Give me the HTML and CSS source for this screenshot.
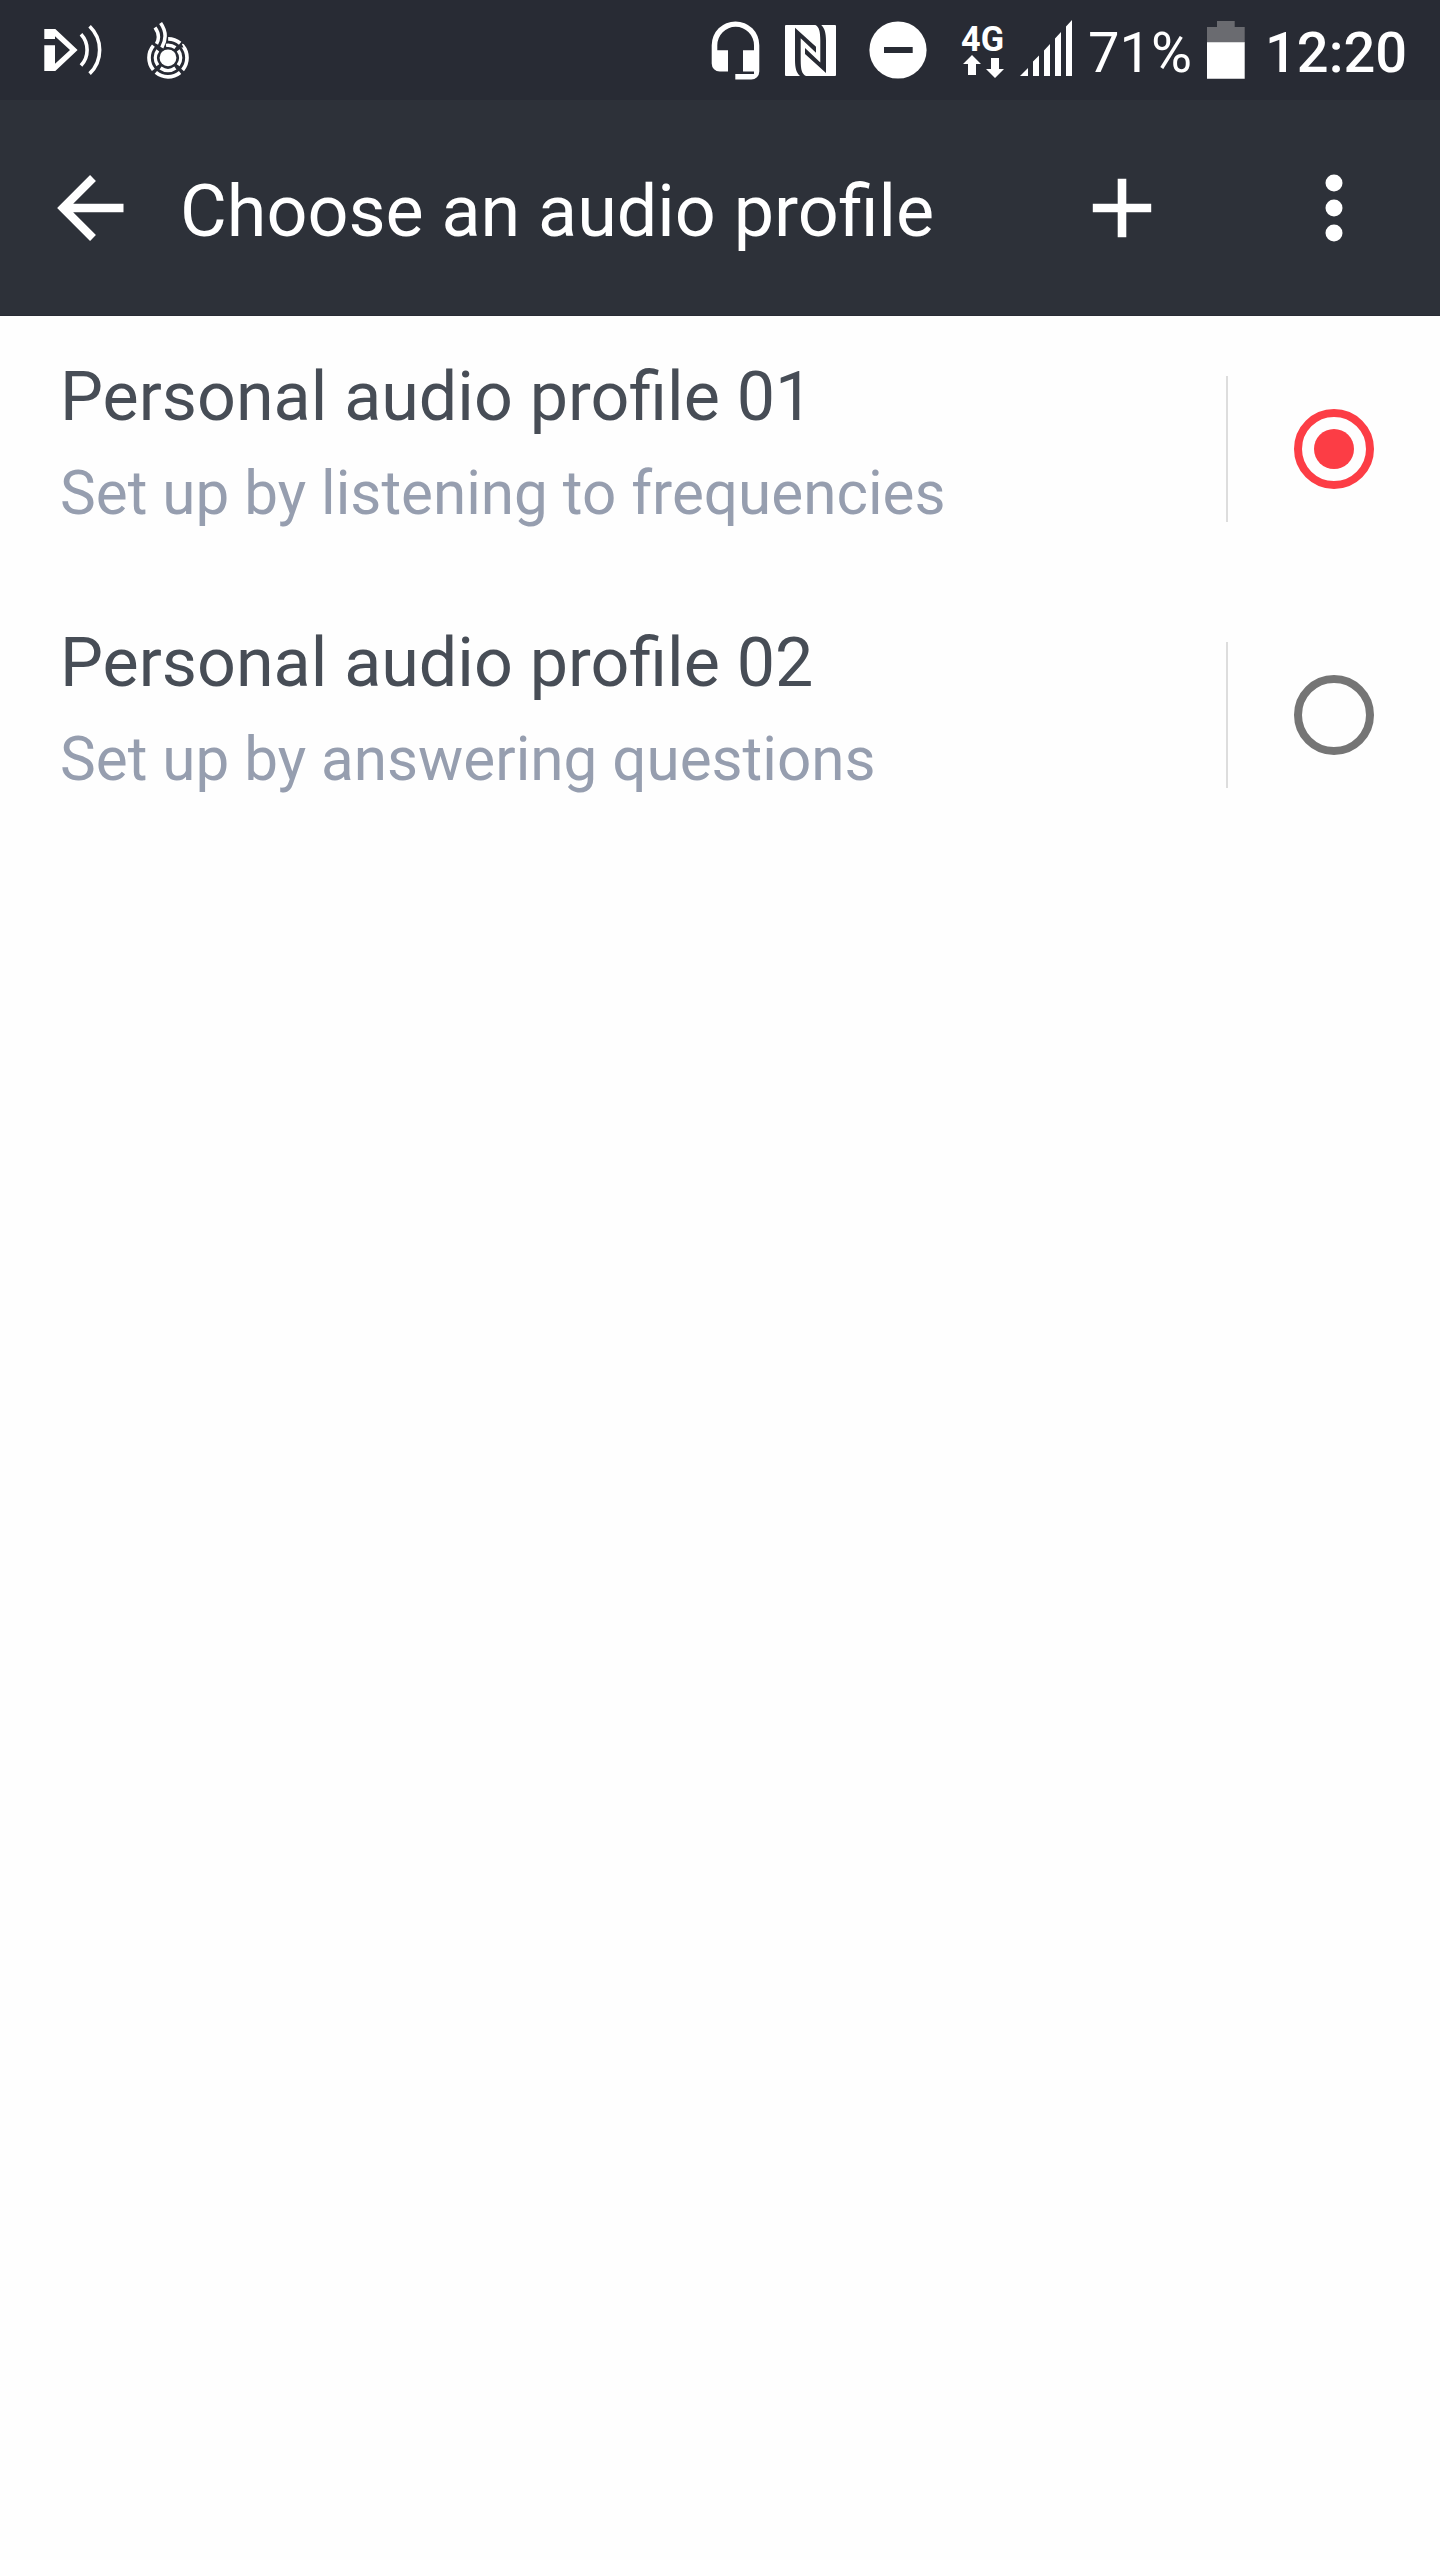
FILE: index.html
```html
<!DOCTYPE html>
<html lang="en">
<head>
<meta charset="utf-8">
<title>Choose an audio profile</title>
<link rel="stylesheet" href="styles.css">
</head>
<body>
<div class="status-bar">
  <div class="status-group notifications">
    <svg width="58" height="52" viewBox="44 24 58 52" fill="none" stroke="#fff">
      <path fill="#fff" stroke="none" fill-rule="evenodd" d="M44.3 29H55.3L77.6 50 55.3 71H44.3V45.2H55V63.8L70 50 55 36.2V39H44.3Z"/>
      <path stroke-width="3.6" d="M81 34.3A23 23 0 0 1 81 65.5M89.6 26.2A33 33 0 0 1 89.6 73.6"/>
    </svg>
    <svg width="44" height="58" viewBox="146 22 44 58" fill="none" stroke="#fff">
      <circle cx="168" cy="57.8" r="8.4" fill="#fff" stroke="none"/>
      <circle cx="168" cy="57.8" r="19" stroke-width="3.7" pathLength="360" stroke-dasharray="79 11 79 11 79 51 39 11" transform="rotate(-39.5 168 57.8)"/>
      <circle cx="168" cy="57.8" r="12.6" stroke-width="3.5" pathLength="360" stroke-dasharray="72 18 72 18 72 45 45 18" transform="rotate(-36 168 57.8)"/>
      <path stroke-width="3.5" d="M155 27.6Q161 36 156.500 43.800M160.600 23Q169 35 161.800 47.600"/>
    </svg>
  </div>
  <div class="status-group system">
    <svg class="headset" width="50" height="60" viewBox="711 20 50 60" fill="#fff">
      <path d="M711.7 45.200A23.800 23.800 0 0 1 759.300 45.200V71.500a8 8 0 0 1-8 8H735.300V74H754V71.600H743V50.200H754V45.200A18.300 18.300 0 0 0 717.300 45.200V50.200H728V71.600H719.700a8 8 0 0 1-8-8Z"/>
    </svg>
    <svg class="nfc" width="51" height="51" viewBox="785 25 51 51">
      <rect x="785" y="25" width="51" height="51" rx="1" fill="#fff"/>
      <g fill="#282b34">
        <path d="M795 27.700L816 46.700V52.700L800.700 38.300V60C800.700 70 802 74 806 76H800C796.500 73 795 68 795 60Z"/>
        <path transform="rotate(180 810.5 50.4)" d="M795 27.700L816 46.700V52.700L800.700 38.300V60C800.700 70 802 74 806 76H800C796.500 73 795 68 795 60Z"/>
      </g>
    </svg>
    <svg class="dnd" width="58" height="58" viewBox="869 21 58 58">
      <circle cx="898" cy="50" r="28.600" fill="#fff"/>
      <path fill="#282b34" d="M884 47H912.700V53H884Z"/>
    </svg>
    <svg class="network" width="46" height="74" viewBox="960 14 46 74" fill="#fff">
      <text class="network-label" x="961" y="51" textLength="43" lengthAdjust="spacingAndGlyphs">4G</text>
      <path d="M972 55L981 64H976V75H968V64H963ZM991 58H999V69H1004L995 78 986 69H991Z"/>
    </svg>
    <svg class="signal" width="52" height="56" viewBox="1020 20 52 56" fill="#fff">
      <path d="M1020 76L1028 68V76ZM1033 61.500L1039 55.500V76H1033ZM1044 50.500L1050 44V76H1044ZM1055 38.500L1061 32V76H1055ZM1066 26.500L1072 20V76H1066Z"/>
    </svg>
    <span class="battery-level">71%</span>
    <svg class="battery" width="38" height="58" viewBox="1207 21 38 58">
      <path fill="#6a6b70" d="M1217 21H1234.700V27H1244.700V43H1207V27H1217Z"/>
      <path fill="#fff" d="M1207 42.300H1244.700V78.700H1207Z"/>
    </svg>
    <span class="clock">12:20</span>
  </div>
</div>
<header class="app-bar">
  <svg class="back" width="68" height="68" viewBox="56 174 68 68" fill="none" stroke="#fff" stroke-width="8.300">
    <path d="M123.500 208H66M93 178L63 208L93 238"/>
  </svg>
  <h1 class="title">Choose an audio profile</h1>
  <svg class="add" width="60" height="60" viewBox="0 0 60 60" fill="#fff">
    <path d="M25.700 .800H34.300V25.700H59.200V34.300H34.300V59.200H25.700V34.300H.800V25.700H25.700Z"/>
  </svg>
  <svg class="more" width="18" height="68" viewBox="0 0 18 68" fill="#fff">
    <circle cx="9" cy="9" r="8.500"/><circle cx="9" cy="34" r="8.500"/><circle cx="9" cy="59" r="8.500"/>
  </svg>
</header>
<main class="profiles">
  <div class="profile">
    <div class="profile-text">
      <div class="profile-name">Personal audio profile 01</div>
      <div class="profile-detail">Set up by listening to frequencies</div>
    </div>
    <div class="profile-choice"><span class="radio selected"></span></div>
  </div>
  <div class="profile">
    <div class="profile-text">
      <div class="profile-name">Personal audio profile 02</div>
      <div class="profile-detail">Set up by answering questions</div>
    </div>
    <div class="profile-choice"><span class="radio"></span></div>
  </div>
</main>
</body>
</html>
```
FILE: styles.css
```css
* { box-sizing: border-box; }
body { margin: 0; min-height: 2560px; background: #fefefe; font-family: Roboto, sans-serif; }
svg { display: block; flex: none; overflow: hidden; }

.status-bar { display: flex; justify-content: space-between; height: 100px; padding: 0 34px 0 44px; background: #282b34; color: #fff; }
.status-group { display: flex; align-items: center; }
.notifications { gap: 44px; }
.notifications svg:last-child { margin-top: 2px; }
.headset { margin-right: 24px; }
.nfc { margin: 1px 33px 0 0; }
.dnd { margin-right: 33px; }
.network { margin: 2px 14px 0 0; }
.network-label { font-size: 35px; font-weight: 700; }
.signal { margin: -4px 16px 0 0; }
.battery-level { width: 105px; margin-right: 14px; }
.battery-level, .clock { font-size: 56px; line-height: 66px; margin-top: 6px; }
.battery { margin-right: 20px; }
.clock { width: 141px; font-weight: 500; }

.app-bar { display: flex; align-items: center; height: 216px; padding: 0 97px 0 56px; background: #2d3139; color: #fff; border-bottom: 1px solid #282b34; }
.title { flex: 1; margin: 9px 0 0 56px; font-size: 71.9px; line-height: 84px; font-weight: 400; }
.add { margin-right: 173px; }

.profile { display: flex; align-items: center; height: 266px; }
.profile-text { width: 1226px; padding: 0 0 6px 60px; }
.profile-name { color: #474d56; font-size: 68.2px; line-height: 96px; }
.profile-detail { color: #969eaf; font-size: 60.2px; line-height: 98px; }
.profile-choice { display: flex; align-items: center; justify-content: center; flex: 1; height: 146px; border-left: 2px solid #ddd; }
.radio { display: flex; align-items: center; justify-content: center; width: 80px; height: 80px; border: 8px solid #757575; border-radius: 50%; }
.selected { border-color: #fc3d45; }
.selected::before { content: ""; width: 40px; height: 40px; border-radius: 50%; background: #fc3d45; }
```
